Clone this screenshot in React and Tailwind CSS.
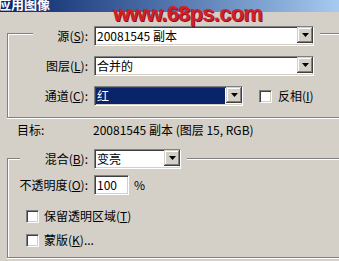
import React from "react";

const sunken =
  "bg-white border border-t-[#808080] border-l-[#808080] border-b-white border-r-white shadow-[inset_1px_1px_0_#404040,inset_-1px_-1px_0_#d4d0c8]";

function DropBtn() {
  return (
    <div className="w-[16px] h-[16px] shrink-0 bg-[#d4d0c8] flex items-center justify-center shadow-[inset_-1px_-1px_0_#404040,inset_1px_1px_0_#d4d0c8,inset_-2px_-2px_0_#808080,inset_2px_2px_0_#fff]">
      <svg width="7" height="4" viewBox="0 0 7 4">
        <polygon points="0,0 7,0 3.5,4" fill="#000" />
      </svg>
    </div>
  );
}

function Select({ w, text, focused }) {
  return (
    <div className={`${sunken} ${w} h-[20px] flex items-stretch shrink-0`}>
      {focused ? (
        <div className="flex-1 m-[1px] bg-[#0a246a] text-white pl-[1px] flex items-center">{text}</div>
      ) : (
        <div className="flex-1 pl-[2px] flex items-center">{text}</div>
      )}
      <DropBtn />
    </div>
  );
}

function Check() {
  return <div className={`${sunken} w-[13px] h-[13px] shrink-0`} />;
}

const K = ({ k }) => (
  <>
    (<span className="underline">{k}</span>)
  </>
);

export default function App() {
  return (
    <div className="w-[339px] h-[261px] overflow-hidden bg-[#d4d0c8] relative text-[12px] leading-[14px] text-black font-[family-name:'Noto_Sans_CJK_SC',sans-serif]">
      {/* title bar */}
      <div className="h-[12px] bg-linear-to-r from-[#0a246a] to-[#a6caf0] overflow-hidden">
        <div className="-ml-[2px] -mt-[3px] text-white font-bold text-[13px] leading-[14px]">应用图像</div>
      </div>
      {/* watermark */}
      <div className="absolute left-[113px] top-[0px] text-[22px] leading-[28px] font-bold tracking-[-0.75px] text-[#d0202c] [text-shadow:1px_1px_0_#8a1018] font-[family-name:'Liberation_Sans',sans-serif]">
        www.68ps.com
      </div>

      {/* source group */}
      <div className="mt-[21px] ml-[7px] w-[340px] border-t border-l border-b border-[#808080] shadow-[inset_1px_1px_0_#fff,0_1px_0_#fff] pb-[11px]">
        <div className="-mt-[8px] ml-[25px] w-[287px] bg-[#d4d0c8] flex items-center h-[20px]">
          <div className="w-[61px] pr-[6px] text-right">
            源<K k="S" />:
          </div>
          <Select w="w-[220px]" text="20081545 副本" />
        </div>
        <div className="mt-[10px] flex items-center h-[20px]">
          <div className="w-[86px] pr-[6px] text-right">
            图层<K k="L" />:
          </div>
          <Select w="w-[220px]" text="合并的" />
        </div>
        <div className="mt-[10px] flex items-center h-[20px]">
          <div className="w-[86px] pr-[6px] text-right">
            通道<K k="C" />:
          </div>
          <Select w="w-[149px]" text="红" focused />
          <div className="ml-[16px]">
            <Check />
          </div>
          <div className="ml-[6px]">
            反相<K k="I" />
          </div>
        </div>
      </div>

      {/* target */}
      <div className="mt-[4px] h-[16px] flex items-center">
        <div className="ml-[17px] w-[76px]">目标:</div>
        <div>20081545 副本 (图层 15, RGB)</div>
      </div>

      {/* blending group */}
      <div className="mt-[20px] ml-[7px] w-[340px] border-t border-l border-b border-[#808080] shadow-[inset_1px_1px_0_#fff,0_1px_0_#fff] pb-[9px]">
        <div className="-mt-[10px] ml-[12px] w-[167px] bg-[#d4d0c8] flex items-center h-[20px]">
          <div className="w-[74px] pr-[6px] text-right">
            混合<K k="B" />:
          </div>
          <Select w="w-[87px]" text="变亮" />
        </div>
        <div className="mt-[6px] flex items-center h-[20px]">
          <div className="w-[86px] pr-[6px] text-right">
            不透明度<K k="O" />:
          </div>
          <div className={`${sunken} w-[35px] h-[20px] pl-[2px] flex items-center`}>100</div>
          <div className="ml-[5px]">%</div>
        </div>
        <div className="mt-[13px] h-[16px] flex items-center">
          <div className="ml-[18px]">
            <Check />
          </div>
          <div className="ml-[5px]">
            保留透明区域<K k="T" />
          </div>
        </div>
        <div className="mt-[8px] h-[16px] flex items-center">
          <div className="ml-[18px]">
            <Check />
          </div>
          <div className="ml-[5px]">
            蒙版<K k="K" />...
          </div>
        </div>
      </div>
    </div>
  );
}
